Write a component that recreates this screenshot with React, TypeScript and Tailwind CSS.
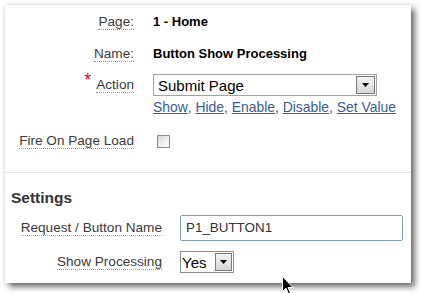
export default function App() {
  const font = { fontFamily: '"Liberation Sans", Arial, sans-serif' };

  const Label = ({ text }: { text: string }) => (
    <span className="border-b border-dotted border-[#9a9a9a] leading-[15px] text-[13.6px] text-[#3a3a3a]">
      {text}
    </span>
  );

  const DropButton = ({ className }: { className: string }) => (
    <span
      className={`flex items-center justify-center border border-[#7a7a7a] bg-gradient-to-b from-[#f4f4f4] to-[#d6d6d6] ${className}`}
    >
      <svg width="7" height="4" viewBox="0 0 7 4">
        <path d="M0 0h7L3.5 4z" fill="#000" />
      </svg>
    </span>
  );

  return (
    <div className="relative h-[293px] w-[421px] overflow-hidden bg-white" style={font}>
      <div className="ml-[5px] mt-[5px] flex h-[278px] w-[406px] flex-col bg-white pt-[1px] shadow-[4px_4px_6px_rgba(0,0,0,0.55),0_0_4px_rgba(0,0,0,0.15)]">
        {/* general */}
        <div className="grid grid-cols-[129px_1fr] gap-x-[19px]">
          <div className="flex h-[32px] items-center justify-end">
            <Label text="Page:" />
          </div>
          <div className="flex h-[32px] items-center text-[13px] font-bold text-black">1 - Home</div>

          <div className="flex h-[31px] items-center justify-end">
            <Label text="Name:" />
          </div>
          <div className="flex h-[31px] items-center text-[13px] font-bold text-black">
            Button Show Processing
          </div>

          <div className="flex h-[32px] items-center justify-end">
            <span className="mr-[5px] -mt-[10px] text-[18px] leading-none text-[#e8001c]">*</span>
            <Label text="Action" />
          </div>
          <div className="flex h-[32px] items-center">
            <div className="flex h-[22px] w-[224px] items-center justify-between border border-[#a3a3a3] bg-white pl-[4px] pr-[1px]">
              <span className="text-[15px] leading-none text-black">Submit Page</span>
              <DropButton className="h-[18px] w-[19px]" />
            </div>
          </div>

          <div />
          <div className="flex h-[14px] items-center text-[13.9px] leading-none text-[#3b5b8c]">
            <span className="underline">Show</span>,&nbsp;
            <span className="underline">Hide</span>,&nbsp;
            <span className="underline">Enable</span>,&nbsp;
            <span className="underline">Disable</span>,&nbsp;
            <span className="underline">Set Value</span>
          </div>

          <div className="mt-[11px] flex h-[30px] items-center justify-end">
            <Label text="Fire On Page Load" />
          </div>
          <div className="mt-[11px] flex h-[30px] items-center pl-[4px]">
            <span className="block h-[13px] w-[13px] border border-[#8c8c8c] bg-gradient-to-br from-[#d4d4d4] via-[#eeeeee] to-white" />
          </div>
        </div>

        <div className="mt-[16px] border-t border-[#e6e6e6]" />

        {/* settings */}
        <div className="mt-[11px] flex h-[28px] items-center pl-[6px] text-[15.5px] font-bold text-[#333]">
          Settings
        </div>
        <div className="grid grid-cols-[157px_1fr] gap-x-[18px]">
          <div className="mt-[1px] flex h-[30px] items-center justify-end">
            <Label text="Request / Button Name" />
          </div>
          <div className="mt-[1px] flex h-[30px] items-center">
            <div className="flex h-[26px] w-[223px] items-center rounded-[2px] border border-[#7f9db9] bg-white pl-[5px] text-[13.4px] text-[#333]">
              P1_BUTTON1
            </div>
          </div>

          <div className="mt-[4px] flex h-[30px] items-center justify-end">
            <Label text="Show Processing" />
          </div>
          <div className="mt-[4px] flex h-[30px] items-center">
            <div className="flex h-[22px] w-[54px] items-center justify-between border border-[#8a8a8a] bg-white pl-[1px] pr-[1px]">
              <span className="text-[15px] leading-none text-black">Yes</span>
              <DropButton className="h-[18px] w-[17px]" />
            </div>
          </div>
        </div>
      </div>

      {/* mouse pointer */}
      <svg className="absolute left-[282px] top-[276px]" width="12" height="19" viewBox="0 0 12 19">
        <path d="M0.5 0.5v15l3.5-3.5 2.5 6 2-1-2.5-5.5h5z" fill="#000" stroke="#fff" strokeWidth="1" />
      </svg>
    </div>
  );
}
